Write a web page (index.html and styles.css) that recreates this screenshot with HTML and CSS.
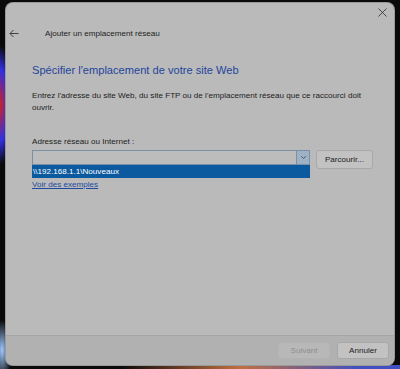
FILE: index.html
```html
<!DOCTYPE html>
<html lang="fr">
<head>
    <meta charset="UTF-8">
    <title>Ajouter un emplacement réseau</title>
    <link rel="stylesheet" href="styles.css">
</head>
<body>
    <div class="bureau">
        <div class="dialogue">
            <div class="barre-titre">
                <svg class="fermer" width="9" height="9" viewBox="0 0 9 9">
                    <path d="M0.5 0.5 L8.5 8.5 M8.5 0.5 L0.5 8.5" stroke="#2a2a2a" stroke-width="0.8" fill="none"/>
                </svg>
            </div>
            <div class="entete">
                <svg class="retour" width="10" height="9" viewBox="0 0 10 9">
                    <path d="M9.5 4.5 H1 M4.5 1 L1 4.5 L4.5 8" stroke="#333" stroke-width="0.9" fill="none"/>
                </svg>
                <span class="titre">Ajouter un emplacement réseau</span>
            </div>
            <div class="contenu">
                <h1>Spécifier l'emplacement de votre site Web</h1>
                <p class="texte">Entrez l'adresse du site Web, du site FTP ou de l'emplacement réseau que ce raccourci doit ouvrir.</p>
                <label class="etiquette">Adresse réseau ou Internet :</label>
                <div class="ligne-adresse">
                    <div class="combo">
                        <div class="champ">
                            <span class="saisie"></span>
                            <span class="fleche">
                                <svg width="7" height="5" viewBox="0 0 7 5">
                                    <path d="M1.2 1.3 L3.5 3.5 L5.8 1.3" stroke="#444" stroke-width="0.8" fill="none"/>
                                </svg>
                            </span>
                        </div>
                        <div class="liste">
                            <div class="choix">\\192.168.1.1\Nouveaux</div>
                        </div>
                        <a class="exemples" href="#">Voir des exemples</a>
                    </div>
                    <button class="bouton parcourir">Parcourir...</button>
                </div>
            </div>
            <div class="pied">
                <button class="bouton inactif">Suivant</button>
                <button class="bouton">Annuler</button>
            </div>
        </div>
    </div>
</body>
</html>
```

FILE: styles.css
```css
html, body {
    margin: 0;
    padding: 0;
    height: 100%;
}
body {
    font-family: "Liberation Sans", Arial, sans-serif;
    background-color: #0a0a0a;
    color: #1c1c1c;
}
.bureau {
    height: 369px;
    padding: 3px 6px 4px 6px;
    box-sizing: border-box;
    background:
        radial-gradient(ellipse 14px 60px at 0 105px, #d02020 0%, #3030e0 60%, rgba(0,0,0,0) 100%),
        radial-gradient(ellipse 10px 30px at 2px 350px, #a0c8ff 0%, rgba(0,0,0,0) 100%),
        linear-gradient(to right, #0a0a0a 30%, #c07040 60%, #4050c0 90%) bottom / 100% 4px no-repeat,
        #0a0a0a;
}
.dialogue {
    height: 100%;
    background-color: #bababa;
    border-radius: 7px;
    display: flex;
    flex-direction: column;
    overflow: hidden;
    box-shadow: 0 0 0 1px #9a9a9a;
}
.barre-titre {
    height: 19px;
    display: flex;
    justify-content: flex-end;
    align-items: center;
    padding: 0 7px 0 0;
}
.entete {
    display: flex;
    align-items: center;
    height: 22px;
    padding-left: 3px;
}
.retour {
    margin-right: 26px;
}
.titre {
    font-size: 8.1px;
    color: #222;
}
.contenu {
    flex: 1;
    padding: 20px 0 0 26px;
}
h1 {
    margin: 0;
    font-size: 11.1px;
    font-weight: normal;
    color: #23459c;
}
.texte {
    margin: 14px 0 0 0;
    font-size: 8.1px;
    line-height: 12px;
    width: 335px;
}
.etiquette {
    display: block;
    margin-top: 23px;
    font-size: 8.1px;
}
.ligne-adresse {
    display: flex;
    align-items: flex-start;
    gap: 6px;
    margin-top: 4px;
}
.combo {
    width: 278px;
    display: flex;
    flex-direction: column;
}
.champ {
    height: 13px;
    border: 1px solid #7b8fa6;
    display: flex;
    background-color: #bcbcbc;
}
.saisie {
    flex: 1;
}
.fleche {
    width: 12px;
    background-color: #9fb1c4;
    border-left: 1px solid #7b8fa6;
    display: flex;
    align-items: center;
    justify-content: center;
}
.liste {
    background-color: #0b599f;
    height: 13px;
    width: 278px;
}
.choix {
    color: #ffffff;
    font-size: 8.1px;
    line-height: 14px;
    padding-left: 1px;
}
.exemples {
    color: #1f4aa0;
    font-size: 8.1px;
    text-decoration: underline;
    margin-top: 2px;
}
.bouton {
    font-family: inherit;
    font-size: 8.1px;
    color: #1c1c1c;
    background-color: #c2c2c2;
    border: 1px solid #a8a8a8;
    border-radius: 3px;
    height: 18px;
    width: 56px;
    padding: 0;
}
.parcourir {
    width: 57px;
    height: 19px;
}
.pied {
    height: 29px;
    background-color: #b1b1b1;
    border-top: 1px solid #a6a6a6;
    display: flex;
    justify-content: flex-end;
    align-items: center;
    gap: 7px;
    padding-right: 5px;
}
.pied .bouton {
    width: 52px;
    height: 17px;
}
.inactif {
    color: #8e8e8e;
    background-color: #b8b8b8;
    border-color: #b3b3b3;
}
```
